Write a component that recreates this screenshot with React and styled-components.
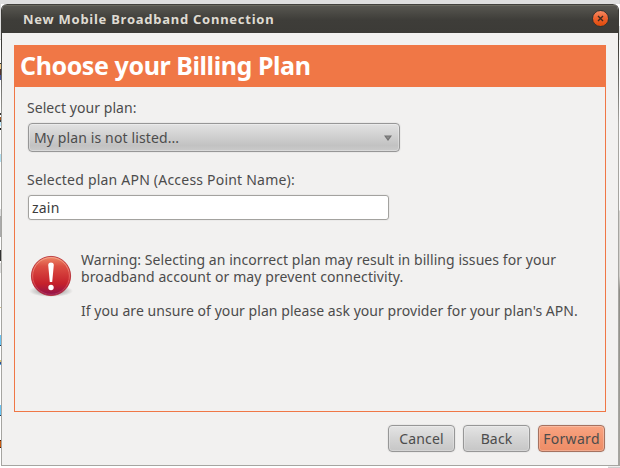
import React from "react";
import styled, { createGlobalStyle } from "styled-components";

const GlobalStyle = createGlobalStyle`
  * { box-sizing: border-box; }
  body {
    margin: 0;
    overflow: hidden;
    background: #fff;
    font-family: "Noto Sans", "Open Sans", sans-serif;
    font-size: 14px;
    color: #4c4c4c;
  }
`;

const Desktop = styled.div`
  width: 620px;
  height: 468px;
  padding: 4px 1px 2px;
  background:
    linear-gradient(#fff, #bdbdbd) 608px 466px / 12px 2px no-repeat,
    linear-gradient(#d8d8d8 4px, #fff 4px 26px, #ddd 26px 40px, #fafafa 40px 210px, #d4d2ce 211px 276px, #8f8e88 290px, #a5a49e 466px) 619px 0 / 1px 466px no-repeat,
    linear-gradient(
      #dedede 39px, #c4c4c4 39px 40px, #fff 40px 63px, #333 63px 64px, #edc98c 64px 69px,
      #53332b 69px 75px, #47549c 75px 80px, #fff 80px 113px, #333 113px 115px, #fff 115px 117px,
      #a45620 117px 120px, #333 120px 122px, #bdeaff 122px 126px, #fff 126px 128px, #222 128px 130px,
      #fff 130px 154px, #b4e2f4 154px 162px, #fff 162px 209px, #ddd 209px 216px, #aaa 216px 237px,
      #fff 237px 250px, #333 250px 261px, #fff 261px 263px, #ddd 263px 273px, #fff 273px 307px,
      #d6c38d 307px 308px, #fff 308px 335px, #69c4f4 335px 345px, #173a58 345px 346px,
      #fff 346px 360px, #d9c36b 360px 362px, #304e91 362px 364px, #4ba4ee 364px 365px,
      #fff 365px 405px, #69c4f4 405px 415px, #173a58 415px 416px, #fff 416px 440px,
      #4a1b08 440px 441px, #c85a10 441px 447px, #4a1b08 447px 448px, #fff 448px
    ) 0 0 / 1px 468px no-repeat,
    linear-gradient(#dedede 4px, #fff 4px);
`;

const Window = styled.div`
  display: flex;
  flex-direction: column;
  width: 618px;
  height: 462px;
  border: 1px solid transparent;
  border-top: 0;
  border-radius: 6px 6px 0 0;
  overflow: hidden;
  background:
    linear-gradient(#f2f1f0, #f2f1f0) padding-box,
    linear-gradient(#3c3b37 40px, #a6a5a1 120px) border-box;
`;

const TitleBar = styled.header`
  display: flex;
  align-items: flex-start;
  justify-content: space-between;
  flex: none;
  height: 29px;
  margin: 0 -1px;
  padding: 4px 10px 0 22px;
  border-top: 1px solid #42413c;
  border-radius: 6px 6px 0 0;
  background: linear-gradient(#6a695f 0 1px, #575650 1px, #3e3d39 15px, #3c3b37);
`;

const Title = styled.div`
  font-size: 13px;
  font-weight: 700;
  letter-spacing: ${(p) => p.$track}px;
  line-height: 20px;
  color: #dfdbd2;
  white-space: nowrap;
`;

const CloseButton = styled.button`
  display: flex;
  width: 17px;
  height: 17px;
  margin-top: 1px;
  padding: 0;
  border: 1px solid #34332f;
  border-radius: 50%;
  align-items: center;
  justify-content: center;
  background: linear-gradient(#f58a63, #ee6331 45%, #df4b0a);
`;

const Content = styled.main`
  display: flex;
  flex: 1;
  flex-direction: column;
  padding: 12px 12px 13px;
`;

const Page = styled.section`
  width: 592px;
  height: 367px;
  border: 1px solid #f07746;
`;

const Heading = styled.h1`
  height: 41px;
  margin: 0;
  padding-left: 5px;
  background: #f07746;
  color: #fff;
  font-size: 25px;
  font-weight: 700;
  line-height: 39px;
  letter-spacing: ${(p) => p.$track}px;
  white-space: nowrap;
`;

const Form = styled.div`
  display: flex;
  flex-direction: column;
  align-items: flex-start;
  padding: 12px 12px 0;
`;

const Text = styled.span`
  display: block;
  height: 17px;
  line-height: 17px;
  letter-spacing: ${(p) => p.$track || 0}px;
  white-space: pre;
`;

const Select = styled.div`
  display: flex;
  align-items: center;
  justify-content: space-between;
  width: 372px;
  height: 29px;
  margin: 7px 0 19px 1px;
  padding: 0 7px 0 5px;
  border: 1px solid #979797;
  border-radius: 4px;
  background: linear-gradient(#e2e2e2, #cecece 50%, #c2c2c2 80%, #cacaca);
  box-shadow: inset 0 0 0 1px rgba(255, 255, 255, 0.3), 0 0 0 1px #eae9e8;
`;

const Entry = styled.div`
  display: flex;
  align-items: center;
  width: 361px;
  height: 25px;
  margin: 7px 0 0 1px;
  padding-left: 3px;
  border: 1px solid #a3a29f;
  border-radius: 3px;
  background: #fff;
  color: #3c3c3c;
  box-shadow: 0 0 0 1px #ebeae9;
`;

const Warning = styled.div`
  display: flex;
  align-items: flex-end;
  gap: 7px;
  margin: 31px 0 0 2px;
`;

const Message = styled.div`
  display: flex;
  flex-direction: column;
  height: 68px;
`;

const Actions = styled.footer`
  display: flex;
  justify-content: flex-end;
  gap: 8px;
  margin-top: 13px;
  padding-right: 1px;
`;

const Button = styled.button`
  display: flex;
  align-items: center;
  justify-content: center;
  width: 67px;
  height: 27px;
  padding: 0;
  border: 1px solid ${(p) => (p.$primary ? "#a57260" : "#979797")};
  border-radius: 4px;
  background: ${(p) =>
    p.$primary
      ? "linear-gradient(#f9a482, #f29570 55%, #ed8d67)"
      : "linear-gradient(#e4e4e4, #d4d4d4 50%, #c6c6c6)"};
  box-shadow: inset 0 0 0 1px rgba(255, 255, 255, 0.25), 0 0 0 1px #eae9e8;
  color: #4c4c4c;
  font: inherit;
`;

const CloseIcon = () => (
  <svg width="15" height="15" viewBox="0 0 15 15">
    <path d="M5 5l5 5M10 5l-5 5" stroke="#3c2a20" strokeWidth="1.4" />
  </svg>
);

const ArrowIcon = () => (
  <svg width="8" height="6" viewBox="0 0 8 6">
    <path d="M0 .5h8L4 6z" fill="#707070" />
    <path d="M2 1.5h4L4 4z" fill="#8c8c8c" />
  </svg>
);

const ErrorSvg = styled.svg`
  align-self: flex-start;
  margin-top: 3px;
`;

const ErrorIcon = () => (
  <ErrorSvg width="45" height="46" viewBox="0 0 45 46">
    <defs>
      <linearGradient id="ball" x1="0" y1="0" x2="0" y2="1">
        <stop offset="0" stopColor="#ee8a68" />
        <stop offset=".25" stopColor="#dc4f43" />
        <stop offset=".7" stopColor="#c5202b" />
        <stop offset="1" stopColor="#8d124c" />
      </linearGradient>
      <linearGradient id="rim" x1="0" y1="0" x2="0" y2="1">
        <stop offset="0" stopColor="#f4a48b" />
        <stop offset=".6" stopColor="#e05a58" />
        <stop offset="1" stopColor="#ac315f" />
      </linearGradient>
      <radialGradient id="shade">
        <stop offset=".5" stopColor="#777" stopOpacity=".5" />
        <stop offset="1" stopColor="#777" stopOpacity="0" />
      </radialGradient>
    </defs>
    <ellipse cx="22" cy="37" rx="22" ry="6" fill="url(#shade)" />
    <circle cx="22" cy="22" r="19.6" fill="url(#ball)" stroke="#b3232c" strokeWidth=".8" />
    <circle cx="22" cy="22" r="18.4" fill="none" stroke="url(#rim)" strokeWidth="1" />
    <path d="M19.2 11c0-3.3 5.6-3.3 5.6 0l-1.6 17h-2.4z" fill="#fff" />
    <circle cx="22" cy="33.5" r="2.7" fill="#fff" />
  </ErrorSvg>
);

export default function App() {
  return (
    <>
      <GlobalStyle />
      <Desktop>
        <Window>
          <TitleBar>
            <Title $track={0.74}>New Mobile Broadband Connection</Title>
            <CloseButton aria-label="Close"><CloseIcon /></CloseButton>
          </TitleBar>
          <Content>
            <Page>
              <Heading $track={-0.42}>Choose your Billing Plan</Heading>
              <Form>
                <Text $track={0.05}>Select your plan:</Text>
                <Select>
                  <Text $track={0.12}>My plan is not listed...</Text>
                  <ArrowIcon />
                </Select>
                <Text $track={0.21}>Selected plan APN (Access Point Name):</Text>
                <Entry><Text $track={0.2}>zain</Text></Entry>
                <Warning>
                  <ErrorIcon />
                  <Message>
                    <Text $track={0.06}>Warning: Selecting an incorrect plan may result in billing issues for your</Text>
                    <Text $track={0.1}>broadband account or may prevent connectivity.</Text>
                    <Text> </Text>
                    <Text $track={0.05}>If you are unsure of your plan please ask your provider for your plan's APN.</Text>
                  </Message>
                </Warning>
              </Form>
            </Page>
            <Actions>
              <Button><Text $track={0.15}>Cancel</Text></Button>
              <Button><Text $track={0.15}>Back</Text></Button>
              <Button $primary><Text $track={0.3}>Forward</Text></Button>
            </Actions>
          </Content>
        </Window>
      </Desktop>
    </>
  );
}
